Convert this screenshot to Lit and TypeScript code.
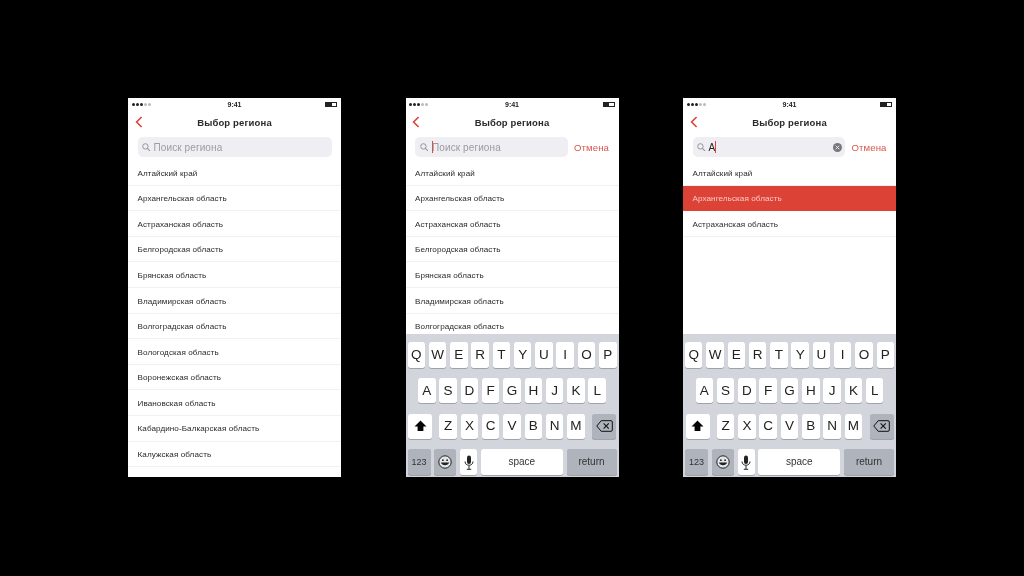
import { LitElement, html, css, svg } from "lit";
import { customElement, property } from "lit/decorators.js";

const REGIONS = [
  "Алтайский край", "Архангельская область", "Астраханская область", "Белгородская область",
  "Брянская область", "Владимирская область", "Волгоградская область", "Вологодская область",
  "Воронежская область", "Ивановская область", "Кабардино-Балкарская область", "Калужская область",
  "Камчатский край",
];

const backIcon = svg`<svg class="back" width="8" height="12" viewBox="0 0 8 12"><path d="M6.6 1 1.6 6l5 5" fill="none" stroke="#d9453a" stroke-width="1.6"/></svg>`;
const searchIcon = svg`<svg class="glass" width="8.5" height="8.5" viewBox="0 0 10 10"><circle cx="4" cy="4" r="3.2" fill="none" stroke="#8e8e93" stroke-width="1.1"/><path d="M6.400 6.400 9.500 9.500" stroke="#8e8e93" stroke-width="1.2"/></svg>`;
const clearIcon = svg`<svg width="9" height="9" viewBox="0 0 10 10"><circle cx="5" cy="5" r="5" fill="#77777c"/><path d="M3 3l4 4M7 3l-4 4" stroke="#eeeef0" stroke-width="1.1"/></svg>`;
const shiftIcon = svg`<svg width="13" height="12" viewBox="0 0 13 12"><path d="M6.5.5 12.5 6.5H9.4V11H3.6V6.5H.5Z" fill="#050505"/></svg>`;
const deleteIcon = svg`<svg width="17" height="12" viewBox="0 0 17 12"><path d="M5.2.7H15a1.3 1.3 0 0 1 1.3 1.3v8a1.3 1.3 0 0 1-1.3 1.3H5.2L.8 6Z" fill="none" stroke="#111" stroke-width="1"/><path d="M7.6 3.4l5.2 5.2M12.8 3.4 7.6 8.6" stroke="#111" stroke-width="1.1"/></svg>`;
const emojiIcon = svg`<svg width="14" height="14" viewBox="0 0 14 14"><circle cx="7" cy="7" r="6.2" fill="#e4e5e8" stroke="#222" stroke-width="1"/><circle cx="4.9" cy="5.2" r=".9" fill="#222"/><circle cx="9.1" cy="5.2" r=".9" fill="#222"/><path d="M3 7.6c.6 3.6 7.400 3.600 8 0Z" fill="#222"/></svg>`;
const micIcon = svg`<svg width="10" height="15" viewBox="0 0 10 15"><rect x="3" y=".6" width="4" height="8.400" rx="2" fill="#222"/><path d="M1 6.500c0 5 8 5 8 0M5 11v3M2.800 14.300h4.400" fill="none" stroke="#222" stroke-width="1"/></svg>`;

@customElement("kbd-panel")
class KbdPanel extends LitElement {
  static styles = css`
    :host { display: flex; flex-direction: column; gap: 10.300px; height: 143px; flex: none; box-sizing: border-box;
      padding: 8px 2px 2px; background: #d2d5db; font-family: "Liberation Sans", Arial, sans-serif; }
    .row { display: flex; justify-content: center; gap: 3.800px; height: 25.500px; }
    .row3 { justify-content: space-between; padding: 0 .5px; }
    .mid { display: flex; gap: 3.800px; }
    .key { width: 17.500px; background: #fff; border-radius: 2.500px; display: flex; align-items: center; justify-content: center;
      font-size: 13.500px; line-height: 16px; color: #222; box-shadow: 0 .7px 0 #8f9298; }
    .dark { background: #aeb3bc; }
    .wide { width: 24px; }
    .sys { font-size: 9px; color: #333; }
    .lbl { font-size: 10px; }
    .n { width: 23px; }
    .e { width: 22px; }
    .m { width: 17px; }
    .space { flex: 1; width: auto; }
    .ret { width: 50px; }
  `;
  render() {
    const keys = (s: string) => [...s].map((c) => html`<div class="key"><span>${c}</span></div>`);
    return html`
      <div class="row">${keys("QWERTYUIOP")}</div>
      <div class="row">${keys("ASDFGHJKL")}</div>
      <div class="row row3">
        <div class="key wide">${shiftIcon}</div>
        <div class="mid">${keys("ZXCVBNM")}</div>
        <div class="key wide dark">${deleteIcon}</div>
      </div>
      <div class="row">
        <div class="key dark sys n"><span>123</span></div>
        <div class="key dark e">${emojiIcon}</div>
        <div class="key m">${micIcon}</div>
        <div class="key sys lbl space"><span>space</span></div>
        <div class="key dark sys lbl ret"><span>return</span></div>
      </div>`;
  }
}

@customElement("phone-screen")
class PhoneScreen extends LitElement {
  @property({ type: Boolean }) keyboard = false;
  @property({ type: Boolean }) active = false;
  @property() query = "";
  @property({ type: Number }) selected = -1;
  @property({ type: Number }) count = 13;

  static styles = css`
    :host { display: flex; flex-direction: column; width: 213px; height: 379px; background: #fff; overflow: hidden; flex: none;
      font-family: "Liberation Sans", Arial, sans-serif; color: #222; }
    .status { height: 12px; flex: none; display: flex; align-items: center; justify-content: space-between; padding: 0 4px 0 3.500px; font-size: 7px; color: #222; position: relative; }
    .dots { display: flex; gap: 1px; }
    .dots i { width: 3px; height: 3px; border-radius: 50%; background: #222; }
    .dots i.off { background: #bbb; }
    .time { font-weight: 700; font-size: 7px; position: absolute; left: 0; right: 0; text-align: center; }
    .batt { width: 12px; height: 5px; border: .7px solid #222; box-sizing: border-box; display: flex; }
    .batt b { width: 55%; background: #222; }
    .nav { height: 24px; flex: none; display: flex; align-items: center; justify-content: center; position: relative; font-size: 9.500px; font-weight: 700; color: #2a2a2a; letter-spacing: .15px; }
    .back { position: absolute; left: 6.500px; top: 6px; }
    .searchbar { flex: none; display: flex; align-items: center; gap: 6px; padding: 3px 9.500px 0 9.500px; height: 23px; box-sizing: border-box; }
    .field { flex: 1; height: 20px; border-radius: 5px; background: #efeff3; display: flex; align-items: center; gap: 3px; padding: 0 3.500px 0 4.500px; font-size: 10px; color: #222; }
    .ph { color: #9b9ba0; letter-spacing: .1px; }
    .txt { flex: 1; display: flex; align-items: center; min-width: 0; }
    .caret { width: 1px; height: 12px; background: #d9453a; flex: none; }
    .caret.first { margin-left: 1px; margin-right: -1px; }
    .q { font-size: 10px; }
    .cancel { color: #d9564c; font-size: 9.600px; letter-spacing: .1px; }
    .list { flex: 1; min-height: 0; overflow: hidden; padding-top: 3px; }
    .item { height: 25.600px; box-sizing: border-box; display: flex; align-items: center; font-size: 8.100px; padding: 1.500px 9.500px 0; color: #2a2a2a; letter-spacing: .08px; border-bottom: .6px solid #f1f1f3; }
    .item.sel { background: #dd4237; color: #f6c9c5; border-bottom-color: #dd4237; }
  `;

  render() {
    return html`
      <div class="status">
        <div class="dots"><i></i><i></i><i></i><i class="off"></i><i class="off"></i></div>
        <span class="time">9:41</span>
        <div class="batt"><b></b></div>
      </div>
      <div class="nav">${backIcon}<span>Выбор региона</span></div>
      <div class="searchbar">
        <div class="field">
          ${searchIcon}
          <div class="txt">
            ${this.active && !this.query ? html`<span class="caret first"></span>` : ""}
            ${this.query
              ? html`<span class="q">${this.query}</span><span class="caret"></span>`
              : html`<span class="ph">Поиск региона</span>`}
          </div>
          ${this.query ? clearIcon : ""}
        </div>
        ${this.active ? html`<span class="cancel">Отмена</span>` : ""}
      </div>
      <div class="list">
        ${REGIONS.slice(0, this.count).map(
          (r, i) => html`<div class="item ${i === this.selected ? "sel" : ""}"><span>${r}</span></div>`
        )}
      </div>
      ${this.keyboard ? html`<kbd-panel></kbd-panel>` : ""}
    `;
  }
}

@customElement("app-root")
export class AppRoot extends LitElement {
  static styles = css`
    :host { display: flex; justify-content: center; gap: 64.500px; box-sizing: border-box; width: 1024px; height: 576px; padding-top: 98px; background: #000; filter: blur(.35px); }
  `;
  render() {
    return html`
      <phone-screen></phone-screen>
      <phone-screen active keyboard count="7"></phone-screen>
      <phone-screen active keyboard query="А" selected="1" count="3"></phone-screen>
    `;
  }
}
